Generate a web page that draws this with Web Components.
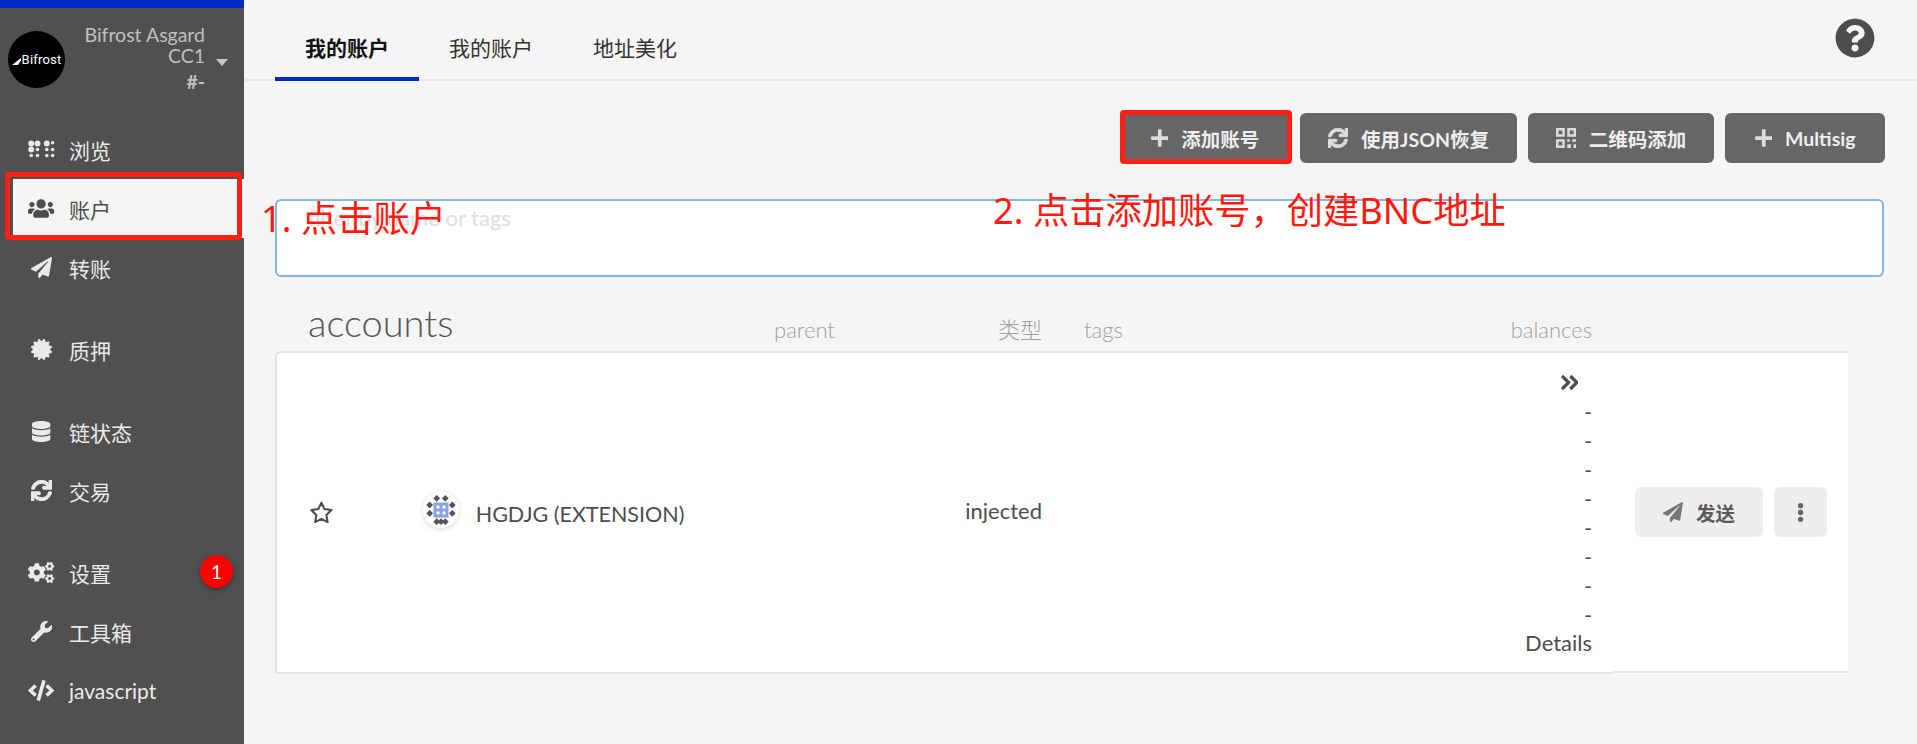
<!DOCTYPE html>
<html lang="zh">
<head>
<meta charset="utf-8">
<title>Bifrost Asgard</title>
<style>
html, body { margin: 0; height: 744px; overflow: hidden; background: #f5f5f5; }
body { font-family: Lato, "Noto Sans CJK SC", sans-serif; font-size: 21px; color: #4d4d4d; }
</style>
</head>
<body>
<app-shell>
  <side-bar slot="side">
    <nav-item icon="grid">浏览</nav-item>
    <nav-item icon="users" active>账户</nav-item>
    <nav-item icon="plane">转账</nav-item>
    <nav-gap></nav-gap>
    <nav-item icon="cert">质押</nav-item>
    <nav-gap></nav-gap>
    <nav-item icon="db">链状态</nav-item>
    <nav-item icon="sync">交易</nav-item>
    <nav-gap></nav-gap>
    <nav-item icon="cogs" badge="1">设置</nav-item>
    <nav-item icon="wrench">工具箱</nav-item>
    <nav-item icon="code">javascript</nav-item>
  </side-bar>
  <top-tabs>
    <tab-link active>我的账户</tab-link>
    <tab-link>我的账户</tab-link>
    <tab-link>地址美化</tab-link>
  </top-tabs>
  <tool-bar>
    <act-btn icon="plus" style="width:168px">添加账号</act-btn>
    <act-btn icon="sync" style="width:217px">使用JSON恢复</act-btn>
    <act-btn icon="qr" style="width:186px">二维码添加</act-btn>
    <act-btn icon="plus" style="width:160px">Multisig</act-btn>
  </tool-bar>
  <filter-box></filter-box>
  <accounts-table></accounts-table>
</app-shell>
<red-mark style="left:5px;top:172px;width:237px;height:68px"></red-mark>
<red-mark style="left:1120px;top:110px;width:172px;height:54px"></red-mark>
<red-note style="left:261px;top:192px">1. 点击账户</red-note>
<red-note style="left:993px;top:184px">2. 点击添加账号，创建BNC地址</red-note>

<script>
const PATHS = {
  plus: [448, '<path d="M416 208H272V64c0-17.67-14.33-32-32-32h-32c-17.67 0-32 14.33-32 32v144H32c-17.67 0-32 14.33-32 32v32c0 17.67 14.33 32 32 32h144v144c0 17.67 14.33 32 32 32h32c17.67 0 32-14.33 32-32V304h144c17.67 0 32-14.33 32-32v-32c0-17.67-14.33-32-32-32z"/>'],
  plane: [512, '<path d="M476 3.2L12.5 270.6c-18.1 10.4-15.8 35.6 2.2 43.2L121 358.4l287.3-253.2c5.5-4.9 13.3 2.6 8.6 8.3L176 407v80.5c0 23.6 28.5 32.9 42.5 15.8L282 426l124.6 52.2c14.2 6 30.4-2.9 33-18.2l72-432C515 7.8 493.3-6.8 476 3.2z"/>'],
  users: [640, '<path d="M96 224c35.3 0 64-28.7 64-64s-28.7-64-64-64-64 28.7-64 64 28.7 64 64 64zm448 0c35.3 0 64-28.7 64-64s-28.7-64-64-64-64 28.7-64 64 28.7 64 64 64zm32 32h-64c-17.6 0-33.5 7.1-45.1 18.6 40.3 22.1 68.9 62 75.1 109.4h66c17.7 0 32-14.3 32-32v-32c0-35.3-28.7-64-64-64zm-256 0c61.9 0 112-50.1 112-112S381.9 32 320 32 208 82.1 208 144s50.1 112 112 112zm76.8 32h-8.3c-20.8 10-43.9 16-68.5 16s-47.6-6-68.5-16h-8.3C179.6 288 128 339.6 128 403.2V432c0 26.5 21.5 48 48 48h288c26.5 0 48-21.5 48-48v-28.8c0-63.6-51.6-115.2-115.2-115.2zm-223.7-13.4C161.5 263.1 145.6 256 128 256H64c-35.3 0-64 28.7-64 64v32c0 17.7 14.3 32 32 32h65.9c6.3-47.4 34.9-87.3 75.2-109.4z"/>'],
  db: [448, '<path d="M448 73.143v45.714C448 159.143 347.667 192 224 192S0 159.143 0 118.857V73.143C0 32.857 100.333 0 224 0s224 32.857 224 73.143zM448 176v102.857C448 319.143 347.667 352 224 352S0 319.143 0 278.857V176c48.125 33.143 136.208 48.572 224 48.572S399.874 209.143 448 176zm0 160v102.857C448 479.143 347.667 512 224 512S0 479.143 0 438.857V336c48.125 33.143 136.208 48.572 224 48.572S399.874 369.143 448 336z"/>'],
  sync: [512, '<path stroke="currentColor" stroke-width="24" d="M440.65 12.57l4 82.77A247.16 247.16 0 0 0 255.83 8C134.73 8 33.91 94.92 12.29 209.82A12 12 0 0 0 24.09 224h49.05a12 12 0 0 0 11.67-9.26 175.91 175.91 0 0 1 317-56.94l-101.46-4.86a12 12 0 0 0-12.57 12v47.41a12 12 0 0 0 12 12H500a12 12 0 0 0 12-12V12a12 12 0 0 0-12-12h-47.37a12 12 0 0 0-11.98 12.57zM255.83 432a175.61 175.61 0 0 1-146-77.8l101.8 4.87a12 12 0 0 0 12.57-12v-47.4a12 12 0 0 0-12-12H12a12 12 0 0 0-12 12V500a12 12 0 0 0 12 12h47.35a12 12 0 0 0 12-12.6l-4.15-82.57A247.17 247.17 0 0 0 255.83 504c121.11 0 221.93-86.92 243.55-201.82a12 12 0 0 0-11.8-14.18h-49.05a12 12 0 0 0-11.67 9.26A175.86 175.86 0 0 1 255.83 432z"/>'],
  code: [640, '<path d="M278.9 511.5l-61-17.7c-6.4-1.8-10-8.5-8.2-14.9L346.2 8.7c1.8-6.4 8.5-10 14.9-8.2l61 17.7c6.4 1.8 10 8.5 8.2 14.9L293.8 503.3c-1.9 6.4-8.5 10.1-14.9 8.2zm-114-112.2l43.5-46.4c4.6-4.9 4.3-12.7-.8-17.2L117 256l90.6-79.7c5.1-4.5 5.5-12.3.8-17.2l-43.5-46.4c-4.5-4.8-12.1-5.1-17-.5L3.8 247.2c-5.1 4.7-5.1 12.8 0 17.5l144.1 135.1c4.9 4.6 12.5 4.4 17-.5zm327.2.6l144.1-135.1c5.1-4.7 5.1-12.8 0-17.5L492.1 112.1c-4.8-4.5-12.4-4.3-17 .5L431.6 159c-4.6 4.9-4.3 12.7.8 17.2L523 256l-90.6 79.7c-5.1 4.5-5.5 12.3-.8 17.2l43.5 46.4c4.5 4.9 12.1 5.1 17 .6z"/>'],
  wrench: [512, '<path d="M507.73 109.1c-2.24-9.03-13.54-12.09-20.12-5.51l-74.36 74.36-67.88-11.31-11.31-67.88 74.36-74.36c6.62-6.62 3.43-17.9-5.66-20.16-47.38-11.74-99.55.91-136.58 37.93-39.64 39.64-50.55 97.1-34.05 147.2L18.74 402.76c-24.99 24.99-24.99 65.51 0 90.5 24.99 24.99 65.51 24.99 90.5 0l213.21-213.21c50.12 16.71 107.47 5.68 147.37-34.22 37.07-37.07 49.7-89.32 37.91-136.73zM64 472c-13.25 0-24-10.75-24-24 0-13.26 10.75-24 24-24s24 10.74 24 24c0 13.25-10.75 24-24 24z"/>'],
  cogs: [640, '<path d="M512.1 191l-8.2 14.3c-3 5.3-9.4 7.5-15.1 5.4-11.8-4.4-22.6-10.7-32.1-18.6-4.6-3.8-5.8-10.5-2.8-15.7l8.2-14.3c-6.9-8-12.3-17.3-15.9-27.4h-16.5c-6 0-11.2-4.3-12.2-10.3-2-12-2.1-24.6 0-37.1 1-6 6.2-10.4 12.2-10.4h16.5c3.6-10.1 9-19.4 15.9-27.4l-8.2-14.3c-3-5.2-1.9-11.9 2.8-15.7 9.5-7.9 20.4-14.2 32.1-18.6 5.7-2.1 12.1.1 15.1 5.4l8.2 14.3c10.5-1.9 21.2-1.9 31.7 0L552 6.3c3-5.3 9.4-7.5 15.1-5.4 11.8 4.4 22.6 10.7 32.1 18.6 4.6 3.8 5.8 10.5 2.8 15.7l-8.2 14.3c6.9 8 12.3 17.3 15.9 27.4h16.5c6 0 11.2 4.3 12.2 10.3 2 12 2.1 24.6 0 37.1-1 6-6.2 10.4-12.2 10.4h-16.5c-3.6 10.1-9 19.4-15.9 27.4l8.2 14.3c3 5.2 1.9 11.9-2.8 15.7-9.5 7.9-20.4 14.2-32.1 18.6-5.7 2.1-12.1-.1-15.1-5.4l-8.2-14.3c-10.4 1.9-21.2 1.9-31.7 0zm-10.5-58.8c38.5 29.6 82.4-14.3 52.8-52.8-38.5-29.7-82.4 14.3-52.8 52.8zM386.3 286.1l33.7 16.8c10.1 5.8 14.5 18.1 10.5 29.1-8.9 24.2-26.4 46.4-42.6 65.8-7.4 8.9-20.2 11.1-30.3 5.3l-29.1-16.8c-16 13.7-34.6 24.6-54.9 31.7v33.6c0 11.6-8.3 21.6-19.7 23.6-24.6 4.2-50.4 4.4-75.9 0-11.5-2-20-11.9-20-23.6V418c-20.3-7.2-38.9-18-54.9-31.7L74 403c-10 5.8-22.9 3.6-30.3-5.3-16.2-19.4-33.3-41.6-42.2-65.7-4-10.9.4-23.2 10.5-29.1l33.3-16.8c-3.9-20.9-3.9-42.4 0-63.4L12 205.8c-10.1-5.8-14.6-18.1-10.5-29 8.9-24.2 26-46.4 42.2-65.8 7.4-8.9 20.2-11.1 30.3-5.3l29.1 16.8c16-13.7 34.6-24.6 54.9-31.7V57.1c0-11.5 8.2-21.5 19.6-23.5 24.6-4.2 50.5-4.4 76-.1 11.5 2 20 11.9 20 23.6v33.6c20.3 7.2 38.9 18 54.9 31.7l29.1-16.8c10-5.8 22.9-3.6 30.3 5.3 16.2 19.4 33.2 41.6 42.1 65.8 4 10.9.1 23.2-10 29.1l-33.7 16.8c3.9 21 3.9 42.5 0 63.5zm-117.6 21.1c59.2-77-28.7-164.9-105.7-105.7-59.2 77 28.7 164.9 105.7 105.7zm243.4 182.7l-8.2 14.3c-3 5.3-9.4 7.5-15.1 5.4-11.8-4.4-22.6-10.7-32.1-18.6-4.6-3.8-5.8-10.5-2.8-15.7l8.2-14.3c-6.9-8-12.3-17.3-15.9-27.4h-16.5c-6 0-11.2-4.3-12.2-10.3-2-12-2.1-24.6 0-37.1 1-6 6.2-10.4 12.2-10.4h16.5c3.6-10.1 9-19.4 15.9-27.4l-8.2-14.3c-3-5.2-1.9-11.9 2.8-15.7 9.5-7.9 20.4-14.2 32.1-18.6 5.7-2.1 12.1.1 15.1 5.4l8.2 14.3c10.5-1.9 21.2-1.9 31.7 0l8.2-14.3c3-5.3 9.4-7.5 15.1-5.4 11.8 4.4 22.6 10.7 32.1 18.6 4.6 3.8 5.8 10.5 2.8 15.7l-8.2 14.3c6.9 8 12.3 17.3 15.9 27.4h16.5c6 0 11.2 4.3 12.2 10.3 2 12 2.1 24.6 0 37.1-1 6-6.2 10.4-12.2 10.4h-16.5c-3.6 10.1-9 19.4-15.9 27.4l8.2 14.3c3 5.2 1.9 11.9-2.8 15.7-9.5 7.9-20.4 14.2-32.1 18.6-5.7 2.1-12.1-.1-15.1-5.4l-8.2-14.3c-10.4 1.9-21.2 1.9-31.7 0zM501.6 431c38.5 29.6 82.4-14.3 52.8-52.8-38.5-29.6-82.4 14.3-52.8 52.8z"/>'],
  cert: [512, '<path d="M458.622 255.92l45.985-45.005c13.708-12.977 7.316-36.039-10.664-40.339l-62.65-15.99 17.661-62.015c4.991-17.838-11.829-34.663-29.661-29.671l-61.994 17.667-15.984-62.671C337.085.197 313.765-6.276 300.99 7.228L256 53.57 211.011 7.229c-12.63-13.351-36.047-7.234-40.325 10.668l-15.984 62.671-61.995-17.667C74.87 57.907 58.056 74.738 63.046 92.572l17.661 62.015-62.65 15.99C.069 174.878-6.31 197.944 7.392 210.915l45.985 45.005-45.985 45.004c-13.708 12.977-7.316 36.039 10.664 40.339l62.65 15.99-17.661 62.015c-4.991 17.838 11.829 34.663 29.661 29.671l61.994-17.667 15.984 62.671c4.439 18.575 27.696 24.018 40.325 10.668L256 458.61l44.989 46.001c12.5 13.488 35.987 7.486 40.325-10.668l15.984-62.671 61.994 17.667c17.836 4.994 34.651-11.837 29.661-29.671l-17.661-62.015 62.65-15.99c17.987-4.302 24.366-27.367 10.664-40.339l-45.984-45.004z"/>'],
  help: [512, '<path d="M504 256c0 136.997-111.043 248-248 248S8 392.997 8 256C8 119.083 119.043 8 256 8s248 111.083 248 248zM262.655 90c-54.497 0-89.255 22.957-116.549 63.758-3.536 5.286-2.353 12.415 2.715 16.258l34.699 26.31c5.205 3.947 12.621 3.008 16.665-2.122 17.864-22.658 30.113-35.797 57.303-35.797 20.429 0 45.698 13.148 45.698 32.958 0 14.976-12.363 22.667-32.534 33.976C247.128 238.528 216 254.941 216 296v4c0 6.627 5.373 12 12 12h56c6.627 0 12-5.373 12-12v-1.333c0-28.462 83.186-29.647 83.186-106.667 0-58.002-60.165-102-116.531-102zM256 338c-25.365 0-46 20.635-46 46 0 25.364 20.635 46 46 46s46-20.636 46-46c0-25.365-20.635-46-46-46z"/>'],
  grid: [640, '<circle cx="78" cy="110" r="72"/><circle cx="231" cy="110" r="72"/><circle cx="458" cy="110" r="72"/><circle cx="600" cy="90" r="42"/><circle cx="78" cy="256" r="72"/><circle cx="231" cy="256" r="44"/><circle cx="458" cy="256" r="44"/><circle cx="600" cy="256" r="44"/><circle cx="78" cy="403" r="44"/><circle cx="231" cy="403" r="44"/><circle cx="458" cy="403" r="44"/><circle cx="600" cy="403" r="44"/>'],
  qr: [512, '<path fill-rule="evenodd" d="M0 0h224v224H0zM64 64v96h96V64zM288 0h224v224H288zM352 64v96h96V64zM0 288h224v224H0zM64 352v96h96v-96z"/><path d="M288 288h64v64h-64zM416 288h96v64h-96zM288 416h96v96h-96zM448 416h64v96h-64z"/>'],
  star: [576, '<path fill="none" stroke="currentColor" stroke-width="48" stroke-linejoin="round" d="M288 40l72 148 164 24-119 116 28 163-145-77-145 77 28-163L52 212l164-24z"/>'],
  chevrons: [512, '<path fill="none" stroke="currentColor" stroke-width="96" d="M30 60l200 196L30 452M280 60l200 196-200 196"/>'],
  dots: [192, '<circle cx="96" cy="72" r="72"/><circle cx="96" cy="256" r="72"/><circle cx="96" cy="440" r="72"/>']
};

function svgIcon(name, h) {
  const [w, body] = PATHS[name];
  const width = Math.round(h * w / 512 * 100) / 100;
  return `<svg width="${width}" height="${h}" viewBox="0 0 ${w} 512" fill="currentColor" style="display:block;flex:none">${body}</svg>`;
}

class AppShell extends HTMLElement {
  connectedCallback() {
    this.attachShadow({mode: "open"}).innerHTML = `
    <style>
      :host { display: grid; grid-template-columns: 244px 1fr; height: 744px; }
      .main { min-width: 0; }
    </style>
    <slot name="side"></slot>
    <div class="main"><slot></slot></div>`;
  }
}

class SideBar extends HTMLElement {
  connectedCallback() {
    this.attachShadow({mode: "open"}).innerHTML = `
    <style>
      :host { display: block; background: #505050; border-top: 8px solid #002bc1; }
      .head { height: 112px; box-sizing: border-box; padding: 23px 16px 0 8px; display: flex; align-items: flex-start; }
      .logo { width: 57px; height: 57px; border-radius: 50%; background: #000; color: #fff; flex: none;
        display: flex; align-items: center; justify-content: center; gap: 1px; font-family: Roboto, sans-serif; font-size: 13px; letter-spacing: .2px; }
      .logo svg { display: block; margin-top: 2px; }
      .chain { flex: 1; margin-top: -7px; text-align: right; color: #c0c0c0; font-size: 19.5px; line-height: 21px; padding-left: 12px; }
      .num { display: block; margin-top: 5px; font-weight: 700; }
      .caret { flex: none; width: 0; height: 0; margin: 28px 0 0 11px; border: 6.5px solid transparent; border-top: 7px solid #c8c8c8; border-bottom: 0; }
    </style>
    <div class="head">
      <div class="logo"><svg width="9" height="8" viewBox="0 0 9 8"><path d="M0 8L9 1v2.500L6 8z" fill="#fff"/></svg><span>Bifrost</span></div>
      <div class="chain">Bifrost Asgard CC1<span class="num">#-</span></div>
      <div class="caret"></div>
    </div>
    <slot></slot>`;
  }
}

class NavItem extends HTMLElement {
  connectedCallback() {
    const active = this.hasAttribute("active");
    const badge = this.getAttribute("badge");
    this.attachShadow({mode: "open"}).innerHTML = `
    <style>
      :host { display: flex; align-items: center; position: relative; height: 59px; margin-left: 13px; padding-left: 15px;
        font-size: 21px; color: ${active ? "#4d4d4d" : "#eaeaea"}; background: ${active ? "#f5f5f5" : "transparent"}; }
      .ico { width: 27px; margin-right: 14px; display: flex; justify-content: center; flex: none; }
      .badge { position: absolute; right: 11px; top: 12px; width: 33px; height: 33px; border-radius: 50%; background: #f00; color: #fff;
        font-size: 19px; display: flex; align-items: center; justify-content: center; box-shadow: 0 2px 5px rgba(0,0,0,.35); }
    </style>
    <span class="ico">${svgIcon(this.getAttribute("icon"), 21)}</span><slot></slot>
    ${badge ? `<span class="badge">${badge}</span>` : ""}`;
  }
}

class NavGap extends HTMLElement {
  connectedCallback() {
    this.attachShadow({mode: "open"}).innerHTML = `<style>:host { display: block; height: 23px; }</style>`;
  }
}

class TopTabs extends HTMLElement {
  connectedCallback() {
    this.attachShadow({mode: "open"}).innerHTML = `
    <style>
      :host { display: flex; height: 81px; box-sizing: border-box; padding: 0 42px 0 31px; border-bottom: 2px solid #e8e8e8; }
      .help { margin-left: auto; padding-top: 18px; color: #4d4d4d; }
    </style>
    <slot></slot>
    <div class="help">${svgIcon("help", 40)}</div>`;
  }
}

class TabLink extends HTMLElement {
  connectedCallback() {
    const active = this.hasAttribute("active");
    this.attachShadow({mode: "open"}).innerHTML = `
    <style>
      :host { display: flex; align-items: center; box-sizing: border-box; height: 81px; padding: 29px 30px 13px; font-size: 21px;
        color: ${active ? "#111" : "#333"}; font-weight: ${active ? 700 : 400};
        border-bottom: 4px solid ${active ? "#002bc1" : "transparent"}; }
    </style>
    <slot></slot>`;
  }
}

class ToolBar extends HTMLElement {
  connectedCallback() {
    this.attachShadow({mode: "open"}).innerHTML = `
    <style>:host { display: flex; justify-content: flex-end; gap: 11px; padding: 32px 32px 0 0; }</style>
    <slot></slot>`;
  }
}

class ActBtn extends HTMLElement {
  connectedCallback() {
    this.attachShadow({mode: "open"}).innerHTML = `
    <style>
      :host { display: flex; align-items: center; justify-content: center; gap: 13px; height: 50px; box-sizing: border-box; padding-top: 0;
        background: #666; color: #eee; border-radius: 6px; font-size: 19.5px; font-weight: 700; white-space: nowrap; }
      span { color: #dcdcdc; }
    </style>
    <span>${svgIcon(this.getAttribute("icon"), 20)}</span><slot></slot>`;
  }
}

class FilterBox extends HTMLElement {
  connectedCallback() {
    this.attachShadow({mode: "open"}).innerHTML = `
    <style>
      :host { display: block; margin: 36px 33px 0 31px; height: 78px; box-sizing: border-box; background: #fff;
        border: 2px solid #85b7d9; border-radius: 6px; padding: 3px 31px; font-size: 22px; line-height: 28px; color: #dedede; }
    </style>
    filter by name or tags`;
  }
}

class AccountsTable extends HTMLElement {
  connectedCallback() {
    const cols = "483px 100px 182px 550px 21px 1fr";
    const dashes = Array(8).fill("<div>-</div>").join("");
    this.attachShadow({mode: "open"}).innerHTML = `
    <style>
      :host { display: block; margin: 0 69px 0 31px; padding-top: 16px; }
      .head, .row { display: grid; grid-template-columns: ${cols}; }
      .head { height: 58px; box-sizing: border-box; padding: 0 0 7px 2px; align-items: end; color: #a0a0a0; font-weight: 300; font-size: 22px; line-height: 28px; }
      .title { font-size: 38px; line-height: 46px; color: #555; padding-left: 31px; margin-bottom: -1px; }
      .parent { padding-left: 14px; }
      .right { text-align: right; }
      .tb { display: flex; justify-content: space-between; padding-left: 42px; }
      .row { height: 323px; background: #fff; border-top: 2px solid #e5e5e5; border-left: 2px solid #e5e5e5; border-top-left-radius: 5px; box-sizing: border-box; }
      .row > div { border-bottom: 2px solid #e5e5e5; box-sizing: border-box; }
      .name { display: flex; align-items: center; padding-left: 32px; }
      .star { color: #4d4d4d; margin-top: -1px; }
      .who { display: flex; align-items: center; margin-left: 89px; }
      .iden { width: 36px; height: 36px; border-radius: 50%; box-shadow: 0 1px 5px rgba(0,0,0,.18); display: block; margin-top: -6px; }
      .nm { margin-left: 17px; margin-top: 2px; color: #4d4d4d; white-space: nowrap; font-size: 21.5px; }
      .typ { display: flex; align-items: center; justify-content: flex-end; padding-bottom: 4px; font-size: 22px; }
      .bal { padding-top: 15px; line-height: 29px; text-align: right; }
      .dets { font-size: 22px; line-height: 27px; }
      .chev { display: flex; justify-content: flex-end; align-items: center; height: 29px; padding-right: 14px; }
      .act { display: flex; align-items: center; padding-left: 22px; gap: 11px; height: 320px; }
      .send { width: 128px; height: 50px; box-sizing: border-box; border-radius: 6px; background: #eee; display: flex; align-items: center; justify-content: center; gap: 13px;
        font-size: 19.5px; font-weight: 700; color: #5a5a5a; }
      .send span { color: #777; }
      .more { width: 53px; height: 50px; border-radius: 6px; background: #eee; display: flex; align-items: center; justify-content: center; color: #666; }
    </style>
    <div class="head">
      <div class="title">accounts</div>
      <div class="parent">parent</div>
      <div class="right">类型</div>
      <div class="tb"><span>tags</span><span>balances</span></div>
    </div>
    <div class="row">
      <div class="name">
        <span class="star">${svgIcon("star", 22)}</span>
        <div class="who">
          <svg class="iden" viewBox="0 0 36 36">
            <circle cx="18" cy="18" r="18" fill="#fff"/>
            <g fill="#555">
              <path d="M13.700 2.900l3.400 3.400-3.400 3.400-3.400-3.400zM22.300 2.900l3.400 3.400-3.400 3.400-3.400-3.400z"/>
              <path d="M13.700 26.300l3.400 3.400-3.400 3.400-3.400-3.400zM18 26.300l3.400 3.400-3.400 3.400-3.400-3.400zM22.300 26.300l3.400 3.400-3.400 3.400-3.400-3.400z"/>
              <path d="M6.700 9.600l3.400 3.400-3.400 3.400L3.300 13zM6.700 17.900l3.400 3.400-3.400 3.400-3.400-3.400z"/>
              <path d="M29.300 9.600l3.400 3.400-3.400 3.400-3.400-3.400zM29.300 17.900l3.400 3.400-3.400 3.400-3.400-3.400z"/>
            </g>
            <rect x="10.500" y="10.500" width="15" height="15" fill="#8ba3dc"/>
            <g fill="#fff"><circle cx="15" cy="15" r="1.700"/><circle cx="21" cy="15" r="1.700"/><circle cx="15" cy="21" r="1.700"/><circle cx="21" cy="21" r="1.700"/></g>
          </svg>
          <span class="nm">HGDJG (EXTENSION)</span>
        </div>
      </div>
      <div></div>
      <div class="typ">injected</div>
      <div class="bal">
        <div class="chev">${svgIcon("chevrons", 17)}</div>
        ${dashes}
        <div class="dets">Details</div>
      </div>
      <div></div>
      <div class="act">
        <div class="send"><span>${svgIcon("plane", 20)}</span>发送</div>
        <div class="more">${svgIcon("dots", 19)}</div>
      </div>
    </div>`;
  }
}

class RedMark extends HTMLElement {
  connectedCallback() {
    this.attachShadow({mode: "open"}).innerHTML = `
    <style>:host { position: absolute; box-sizing: border-box; border: 5px solid #ff2015; border-radius: 4px; }</style>`;
  }
}

class RedNote extends HTMLElement {
  connectedCallback() {
    this.attachShadow({mode: "open"}).innerHTML = `
    <style>:host { position: absolute; font-size: 36.25px; line-height: 52px; color: #ff1a0f; white-space: nowrap;
      font-family: "Noto Sans", "Noto Sans CJK SC", sans-serif; }</style>
    <slot></slot>`;
  }
}

customElements.define("app-shell", AppShell);
customElements.define("side-bar", SideBar);
customElements.define("nav-item", NavItem);
customElements.define("nav-gap", NavGap);
customElements.define("top-tabs", TopTabs);
customElements.define("tab-link", TabLink);
customElements.define("tool-bar", ToolBar);
customElements.define("act-btn", ActBtn);
customElements.define("filter-box", FilterBox);
customElements.define("accounts-table", AccountsTable);
customElements.define("red-mark", RedMark);
customElements.define("red-note", RedNote);
</script>
</body>
</html>
